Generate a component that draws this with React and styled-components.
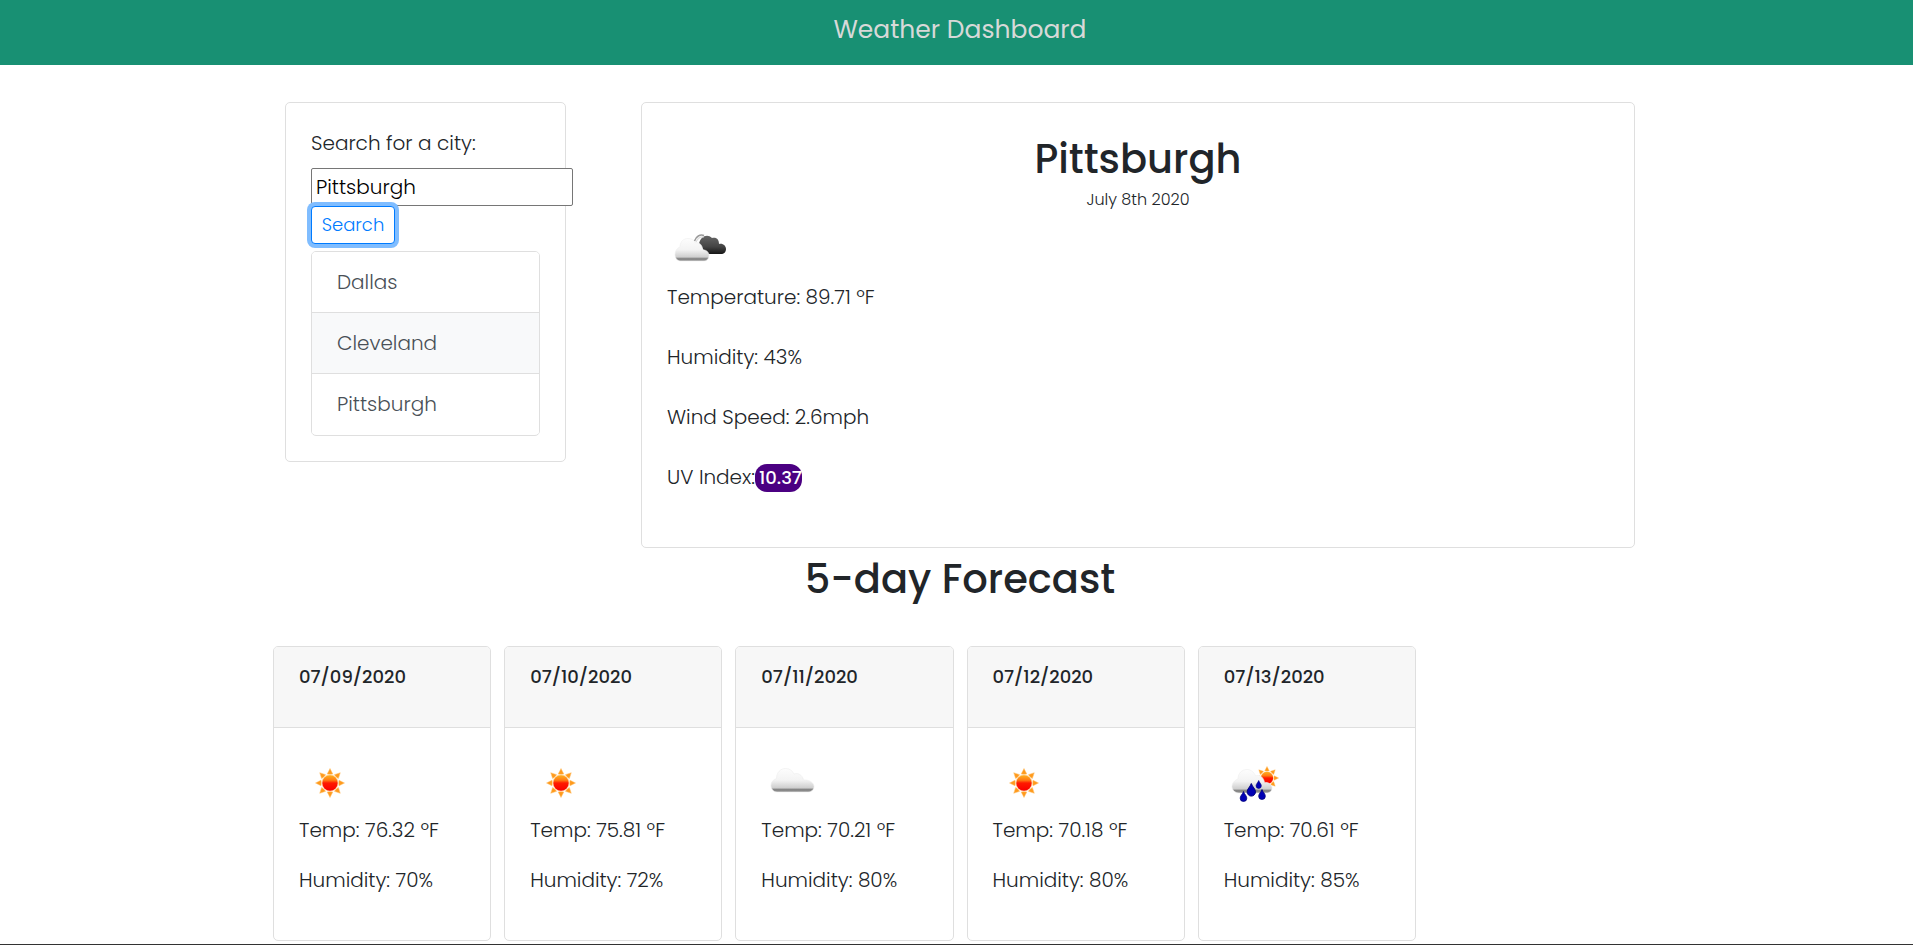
import React, { useId, useState } from "react";
import styled, { createGlobalStyle } from "styled-components";

const GlobalStyle = createGlobalStyle`
  *, *::before, *::after { box-sizing: border-box; }
  body {
    margin: 0;
    background: #fff;
    color: #212529;
    font-family: Poppins, Inter, "Liberation Sans", sans-serif;
    font-size: 20px;
    font-weight: 300;
    line-height: 30px;
  }
  h1, h2, h3, p, ul { margin: 0; padding: 0; }
`;

const Header = styled.header`
  height: 65px;
  padding: 11px 0 0 7px;
  background: #189073;
`;

const Brand = styled.h1`
  color: #d7d9d8;
  font-size: 25px;
  font-weight: 400;
  line-height: 38px;
  text-align: center;
`;

const Page = styled.main`
  padding: 37px 0 3px 7px;
  border-bottom: 1px solid #333;
`;

const Container = styled.div`
  width: 100%;
  max-width: 1374px;
  margin: 0 auto;
`;

const Columns = styled.div`
  display: grid;
  grid-template-columns: 281px minmax(0, 1fr);
  gap: 75px;
  align-items: start;
  padding: 0 12px;
`;

const Card = styled.section`
  min-width: 0;
  border: 1px solid #dfdfdf;
  border-radius: 5px;
  background: #fff;
`;

const SearchCard = styled(Card)`
  padding: 25px;
`;

const SearchForm = styled.form`
  display: flex;
  flex-direction: column;
  align-items: flex-start;
`;

const Label = styled.label`
  margin-bottom: 10px;
`;

const CityInput = styled.input`
  flex: none;
  width: 262px;
  height: 38px;
  padding: 1px 4px;
  border: 1px solid #767676;
  border-radius: 2px;
  background: #fff;
  color: #000;
  font: inherit;
`;

const SearchButton = styled.button`
  width: 84px;
  height: 38px;
  padding: 0;
  border: 1px solid #007bff;
  border-radius: 4px;
  background: #fff;
  box-shadow: 0 0 0 4px #80bdff;
  color: #007bff;
  font: inherit;
  font-size: 18px;
  cursor: pointer;
`;

const CityList = styled.ul`
  margin-top: 7px;
  overflow: hidden;
  border: 1px solid #dfdfdf;
  border-radius: 5px;
  list-style: none;

  && { padding-bottom: 1px; }
`;

const CityItem = styled.li`
  & + & { border-top: 1px solid #dfdfdf; }
`;

const CityButton = styled.button`
  display: block;
  width: 100%;
  height: 60px;
  padding: 0 25px;
  border: 0;
  background: ${({ $active }) => ($active ? "#f8f9fa" : "#fff")};
  color: #495057;
  font: inherit;
  text-align: left;
  cursor: pointer;
`;

const CurrentCard = styled(Card)`
  padding: 31px 25px 55px;
`;

const Title = styled.h2`
  font-size: 40px;
  font-weight: 500;
  line-height: 50px;
  text-align: center;
`;

const DateLine = styled.p`
  && { margin: 4px 0 8px; }
  font-size: 16px;
  line-height: 24px;
  text-align: center;
`;

const Icon = styled.svg`
  display: block;
  width: 62px;
  height: 62px;
`;

const Readings = styled.div`
  display: flex;
  flex-direction: column;
  gap: ${({ $gap }) => $gap}px;
`;

const UvBadge = styled.span`
  display: inline-block;
  padding: 0 0 0 4px;
  border-radius: 12px;
  background: #4b0082;
  color: #fff;
  font-size: 18px;
  font-weight: 500;
  line-height: 28px;
`;

const ForecastTitle = styled(Title)`
  && { margin-top: 6px; }
`;

const Forecast = styled.div`
  display: grid;
  grid-template-columns: repeat(6, minmax(0, 1fr));
  gap: 13px;
  margin-top: 42px;
`;

const DayHeader = styled.header`
  height: 81px;
  padding: 15px 25px;
  border-bottom: 1px solid #dfdfdf;
  border-radius: 4px 4px 0 0;
  background: #f7f7f7;
`;

const DayTitle = styled.h3`
  font-size: 18px;
  font-weight: 500;
  line-height: 30px;
`;

const DayBody = styled.div`
  padding: 25px 25px 45px;
`;

function Gradients({ id }) {
  return (
    <defs>
      <linearGradient id={`${id}-cloud`} x1="0" y1="0" x2="0" y2="1">
        <stop offset="0" stopColor="#fdfdfd" />
        <stop offset="0.5" stopColor="#f3f3f3" />
        <stop offset="0.82" stopColor="#cfcfcf" />
        <stop offset="0.9" stopColor="#808080" />
        <stop offset="1" stopColor="#999" />
      </linearGradient>
      <linearGradient id={`${id}-dark`} x1="0" y1="0" x2="0" y2="1">
        <stop offset="0" stopColor="#666" />
        <stop offset="0.6" stopColor="#444" />
        <stop offset="1" stopColor="#161616" />
      </linearGradient>
      <linearGradient id={`${id}-sun`} x1="0" y1="0" x2="0" y2="1">
        <stop offset="0" stopColor="#ffb01f" />
        <stop offset="0.32" stopColor="#ff7a12" />
        <stop offset="0.5" stopColor="#ff1a00" />
        <stop offset="1" stopColor="#f80000" />
      </linearGradient>
    </defs>
  );
}

function Sun({ id, x, y, scale = 1 }) {
  return (
    <g transform={`translate(${x} ${y}) scale(${scale})`}>
      {[0, 45, 90, 135, 180, 225, 270, 315].map((angle) => (
        <path
          key={angle}
          d="M0-14.500 2.800-9Q0-8.200-2.800-9Z"
          fill="#ff9a1c"
          stroke="#ffc06a"
          strokeWidth="0.5"
          transform={`rotate(${angle})`}
        />
      ))}
      <circle r="8.5" fill="#ffdcae" />
      <circle r="7.7" fill={`url(#${id}-sun)`} />
    </g>
  );
}

const CLOUD =
  "M6 24C2.500 24 0 21 0 17.500 0 14 2.500 11.500 5.500 10.500 5.500 4.500 9.500 0.500 14.500 0.500 18.500 0.500 21.500 2.500 23 6 27 4.500 31.500 7 32.500 12 37 11.500 43 14 43 18.500 43 22 40 24 37 24Z";
const FRONT_CLOUD =
  "M6 23C2.500 23 0 20.500 0 16.500 0 13 2 10 5 9 5 3.500 8.500 0.500 13 0.500 17 0.500 19 2 20.500 5 24.500 3.500 28 8 27.500 12 31 11.500 34 14 34 17.500 34 21 31.500 23 29 23Z";
const BACK_CLOUD =
  "M0 9C1 2 8 -2 13 3 18 2 20 5 20 9 24 8 27 11 27 14 27 17 25 19 22 19H8Z";

function WeatherIcon({ kind, label }) {
  const id = useId().replace(/:/g, "");
  return (
    <Icon viewBox="0 0 62 62" role="img" aria-label={label}>
      <Gradients id={id} />
      {kind === "sun" && <Sun id={id} x={31} y={30} />}
      {kind === "cloud" && (
        <path d={CLOUD} transform="translate(10 15)" fill={`url(#${id}-cloud)`} stroke="#ececec" strokeWidth="0.6" />
      )}
      {kind === "broken" && (
        <>
          <path d={BACK_CLOUD} transform="translate(32 15)" fill={`url(#${id}-dark)`} />
          <path d="M27.500 21C29 16.500 33 14 37 15.500" fill="none" stroke="#999" strokeWidth="1.500" />
          <path d="M29 22C31 17.500 34 16.500 37 17" fill="none" stroke="#ddd" strokeWidth="1.200" />
          <path d={FRONT_CLOUD} transform="translate(8 18)" fill={`url(#${id}-cloud)`} stroke="#eee" strokeWidth="0.6" />
        </>
      )}
      {kind === "rain" && (
        <>
          <Sun id={id} x={43} y={25} scale={0.8} />
          <path
            transform="translate(-2 0)"
            d="M17 40C13 40 10 37 10 33.500 10 30 13 27 16 26 16 20 20 16.500 25 16.500 29 16.500 32 19 33.500 23 38 21 42 25 42.500 29.500 46 29 50 31 50 35 50 38 47.500 40 44 40Z"
            fill={`url(#${id}-cloud)`}
            stroke="#eee"
            strokeWidth="0.6"
          />
          {[
            [19.5, 38.5, 0.95],
            [27.3, 30.5, 1.2],
            [34.7, 27.5, 0.75],
            [38, 36.5, 0.95],
          ].map(([x, y, s]) => (
            <path
              key={x}
              d="M0 0C1 3 3.500 4.500 3.500 7A3.500 3.500 0 0 1-3.500 7C-3.500 4.500-1 3 0 0Z"
              transform={`translate(${x} ${y}) scale(${s})`}
              fill="#0000b4"
              stroke="#000078"
              strokeWidth="0.8"
            />
          ))}
        </>
      )}
    </Icon>
  );
}

const CITIES = ["Dallas", "Cleveland", "Pittsburgh"];

const DAYS = [
  { date: "07/09/2020", kind: "sun", label: "Clear", temp: "76.32", humidity: 70 },
  { date: "07/10/2020", kind: "sun", label: "Clear", temp: "75.81", humidity: 72 },
  { date: "07/11/2020", kind: "cloud", label: "Cloudy", temp: "70.21", humidity: 80 },
  { date: "07/12/2020", kind: "sun", label: "Clear", temp: "70.18", humidity: 80 },
  { date: "07/13/2020", kind: "rain", label: "Rain", temp: "70.61", humidity: 85 },
];

export default function App() {
  const [city, setCity] = useState("Pittsburgh");
  return (
    <>
      <GlobalStyle />
      <Header>
        <Brand>Weather Dashboard</Brand>
      </Header>
      <Page>
        <Container>
          <Columns>
            <SearchCard>
              <SearchForm onSubmit={(event) => event.preventDefault()}>
                <Label htmlFor="city">Search for a city:</Label>
                <CityInput id="city" type="text" value={city} onChange={(event) => setCity(event.target.value)} />
                <SearchButton type="submit">Search</SearchButton>
              </SearchForm>
              <CityList>
                {CITIES.map((name) => (
                  <CityItem key={name}>
                    <CityButton type="button" $active={name === "Cleveland"} onClick={() => setCity(name)}>
                      {name}
                    </CityButton>
                  </CityItem>
                ))}
              </CityList>
            </SearchCard>
            <CurrentCard>
              <Title>Pittsburgh</Title>
              <DateLine>July 8th 2020</DateLine>
              <WeatherIcon kind="broken" label="Broken clouds" />
              <Readings $gap={30}>
                <p>Temperature: 89.71 ºF</p>
                <p>Humidity: 43%</p>
                <p>Wind Speed: 2.6mph</p>
                <p>
                  UV Index:<UvBadge>10.37</UvBadge>
                </p>
              </Readings>
            </CurrentCard>
          </Columns>
          <ForecastTitle>5-day Forecast</ForecastTitle>
          <Forecast>
            {DAYS.map((day) => (
              <Card as="article" key={day.date}>
                <DayHeader>
                  <DayTitle>{day.date}</DayTitle>
                </DayHeader>
                <DayBody>
                  <WeatherIcon kind={day.kind} label={day.label} />
                  <Readings $gap={20}>
                    <p>Temp: {day.temp} ºF</p>
                    <p>Humidity: {day.humidity}%</p>
                  </Readings>
                </DayBody>
              </Card>
            ))}
          </Forecast>
        </Container>
      </Page>
    </>
  );
}
